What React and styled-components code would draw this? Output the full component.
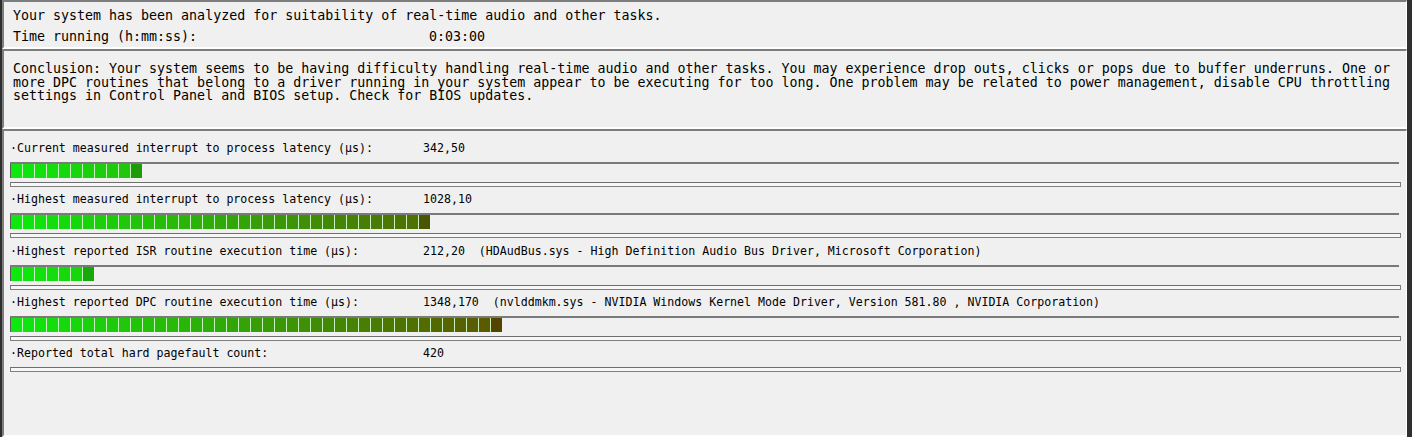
import React from 'react';
import styled, { createGlobalStyle } from 'styled-components';

const GlobalStyle = createGlobalStyle`
  html, body {
    margin: 0;
    padding: 0;
    background: #2e2e2e;
  }
`;

const Frame = styled.div`
  display: flex;
  flex-direction: column;
  width: 1412px;
  height: 437px;
  box-sizing: border-box;
  padding: 0 5px 0 2px;
  background: #2e2e2e;
  overflow: hidden;
  font-family: 'DejaVu Sans Mono', 'Liberation Mono', monospace;
  color: #000000;
`;

const Panel = styled.div`
  box-sizing: border-box;
  background: #f0f0f0;
  border-top: 2px solid #7d7d7d;
  border-left: 2px solid #7d7d7d;
  border-right: 1px solid #ffffff;
  border-bottom: 2px solid #ffffff;
  height: ${(p) => (p.$height ? p.$height + 'px' : 'auto')};
  flex: ${(p) => (p.$grow ? 1 : 'none')};
  padding: ${(p) => p.$pad};
`;

const Line = styled.div`
  display: flex;
  font-size: 13.3px;
  line-height: ${(p) => p.$lh || 21}px;
  white-space: pre;
`;

const LineLabel = styled.span`
  width: 416px;
  flex: none;
`;

const Row = styled.div`
  display: flex;
  flex-direction: column;
  height: 51.25px;
`;

const RowText = styled.div`
  display: flex;
  font-size: 11.6px;
  line-height: 16px;
  white-space: pre;
`;

const RowLabel = styled.span`
  width: 413px;
  flex: none;
`;

const BarTrack = styled.div`
  display: flex;
  margin-top: 6px;
  height: 15px;
  border-top: 2px solid #7a7a7a;
  box-sizing: content-box;
  margin-right: 2px;
`;

const Block = styled.div`
  width: 11px;
  height: 14px;
  flex: none;
  border-left: 1px solid #c8f0c0;
  background: ${(p) => p.$color};
  &:first-child {
    border-left-color: #5a5a5a;
  }
`;

const Groove = styled.div`
  margin-top: ${(p) => p.$top}px;
  height: 3px;
  border: 1px solid #7e7e7e;
  border-top-color: #6e6e6e;
  background: #f7f7f7;
`;

const rows = [
  {
    label: '·Current measured interrupt to process latency (µs):',
    value: '342,50',
    blocks: 11,
  },
  {
    label: '·Highest measured interrupt to process latency (µs):',
    value: '1028,10',
    blocks: 35,
  },
  {
    label: '·Highest reported ISR routine execution time (µs):',
    value: '212,20  (HDAudBus.sys - High Definition Audio Bus Driver, Microsoft Corporation)',
    blocks: 7,
  },
  {
    label: '·Highest reported DPC routine execution time (µs):',
    value:
      '1348,170  (nvlddmkm.sys - NVIDIA Windows Kernel Mode Driver, Version 581.80 , NVIDIA Corporation)',
    blocks: 41,
  },
  {
    label: '·Reported total hard pagefault count:',
    value: '420',
    blocks: 0,
  },
];

const conclusion = [
  'Conclusion: Your system seems to be having difficulty handling real-time audio and other tasks. You may experience drop outs, clicks or pops due to buffer underruns. One or',
  'more DPC routines that belong to a driver running in your system appear to be executing for too long. One problem may be related to power management, disable CPU throttling',
  'settings in Control Panel and BIOS setup. Check for BIOS updates.',
];

// green -> olive along the absolute block index
const blockColor = (i, last) => {
  const t = Math.min(i / 40, 1);
  let r = 14 + (94 - 14) * t;
  let g = 232 + (86 - 232) * t;
  let b = 14 * (1 - t);
  if (last) {
    r *= 0.88;
    g *= 0.8;
    b *= 0.8;
  }
  return `rgb(${Math.round(r)}, ${Math.round(g)}, ${Math.round(b)})`;
};

const Bar = ({ count }) => (
  <BarTrack>
    {Array.from({ length: count }, (_, i) => (
      <Block key={i} $color={blockColor(i, i === count - 1)} />
    ))}
  </BarTrack>
);

export default function App() {
  return (
    <Frame>
      <GlobalStyle />
      <Panel $height={49} $pad='3px 0 0 9px'>
        <Line>Your system has been analyzed for suitability of real-time audio and other tasks.</Line>
        <Line>
          <LineLabel>Time running (h:mm:ss):</LineLabel>
          <span>0:03:00</span>
        </Line>
      </Panel>
      <Panel $height={80} $pad='11px 0 0 9px'>
        {conclusion.map((c) => (
          <Line key={c} $lh={13.5}>
            {c}
          </Line>
        ))}
      </Panel>
      <Panel $grow $pad='9px 5px 0 6px'>
        {rows.map((r) => (
          <Row key={r.label}>
            <RowText>
              <RowLabel>{r.label}</RowLabel>
              <span>{r.value}</span>
            </RowText>
            {r.blocks > 0 && <Bar count={r.blocks} />}
            <Groove $top={r.blocks > 0 ? 3 : 6} />
          </Row>
        ))}
      </Panel>
    </Frame>
  );
}
